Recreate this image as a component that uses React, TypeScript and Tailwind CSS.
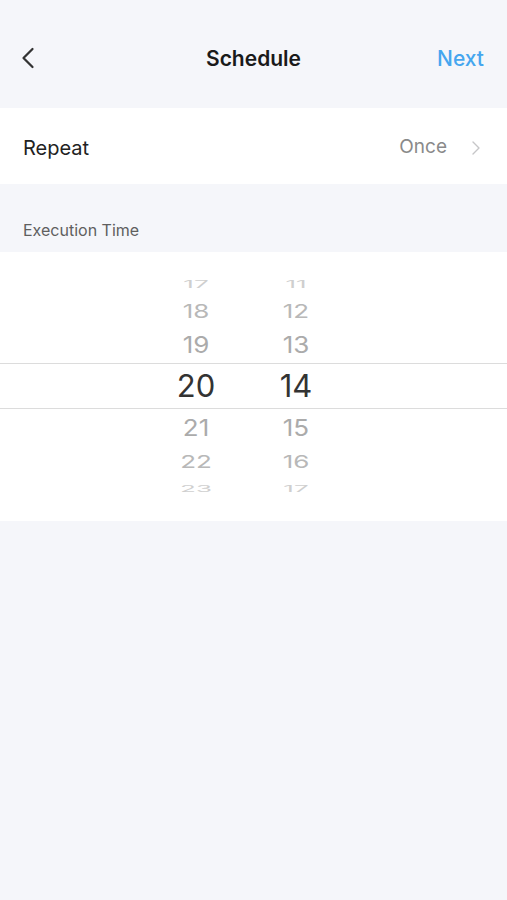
import { ChevronLeft, ChevronRight } from "lucide-react";

type WheelRow = { h: number; hour: string; min: string; scale: number; color: string };

const above: WheelRow[] = [
  { h: 22, hour: "17", min: "11", scale: 0.38, color: "#cfcfcf" },
  { h: 31, hour: "18", min: "12", scale: 0.7, color: "#b8b8b8" },
  { h: 36, hour: "19", min: "13", scale: 0.88, color: "#ababab" },
];

const below: WheelRow[] = [
  { h: 38, hour: "21", min: "15", scale: 0.88, color: "#ababab" },
  { h: 30, hour: "22", min: "16", scale: 0.68, color: "#b8b8b8" },
  { h: 23, hour: "23", min: "17", scale: 0.36, color: "#cfcfcf" },
];

const Row = ({ row }: { row: WheelRow }) => (
  <div className="flex justify-center pr-[15px]" style={{ height: row.h }}>
    {[row.hour, row.min].map((v, i) => (
      <div key={i} className="w-[100px] flex items-center justify-center">
        <span
          className="text-[26px] leading-none"
          style={{ transform: `scaleY(${row.scale})`, color: row.color }}
        >
          {v}
        </span>
      </div>
    ))}
  </div>
);

export default function App() {
  return (
    <div
      className="min-h-[900px] bg-[#f5f6fa]"
      style={{ fontFamily: "Inter, 'Noto Sans', sans-serif" }}
    >
      {/* nav bar */}
      <div className="h-[108px] flex items-center pl-[10px] pt-[8px] relative">
        <ChevronLeft size={36} strokeWidth={1.5} className="text-[#333]" />
        <div className="absolute left-0 right-0 top-[43px] text-center text-[21px] font-semibold text-[#1a1a1a]">
          Schedule
        </div>
        <div className="ml-auto pr-[23px] pt-[2px] text-[21px] font-medium text-[#45a6ef]">Next</div>
      </div>

      {/* repeat row */}
      <div className="h-[76px] bg-white flex items-center pl-[23px] pr-[19px] pt-[3px]">
        <span className="text-[20px] text-[#222]">Repeat</span>
        <span className="ml-auto text-[19px] text-[#8a8a8a]">Once</span>
        <ChevronRight size={24} strokeWidth={1.4} className="ml-[17px] text-[#c6c6c8]" />
      </div>

      {/* section label */}
      <div className="h-[68px] flex items-end pl-[23px] pb-[10px]">
        <span className="text-[16px] text-[#5f5f5f]">Execution Time</span>
      </div>

      {/* wheel */}
      <div className="bg-white pt-[22px] pb-[21px]">
        {above.map((r) => (
          <Row key={r.hour} row={r} />
        ))}
        <div className="h-[46px] border-y border-[#dcdcdc] flex justify-center pr-[15px]">
          <div className="w-[100px] flex items-center justify-center text-[31px] text-[#333]">20</div>
          <div className="w-[100px] flex items-center justify-center text-[31px] text-[#333]">14</div>
        </div>
        {below.map((r) => (
          <Row key={r.hour} row={r} />
        ))}
      </div>
    </div>
  );
}
